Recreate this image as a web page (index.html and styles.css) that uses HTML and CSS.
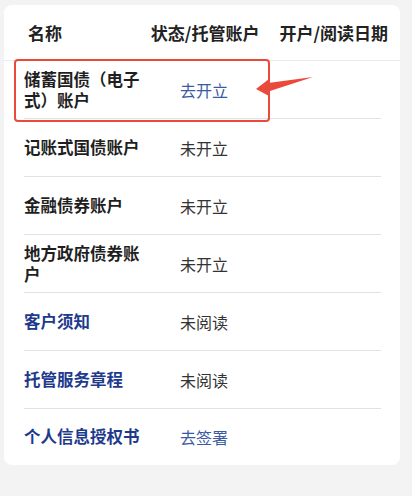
FILE: index.html
```html
<!DOCTYPE html>
<html lang="zh-CN">
<head>
  <meta charset="UTF-8">
  <title>账户列表</title>
  <link rel="stylesheet" href="styles.css">
</head>
<body>
  <div class="card">
    <div class="head">
      <span class="h-name">名称</span>
      <span class="h-status">状态/托管账户</span>
      <span class="h-date">开户/阅读日期</span>
    </div>

    <div class="row">
      <span class="name">储蓄国债（电子式）账户</span>
      <span class="status link">去开立</span>
    </div>
    <div class="row">
      <span class="name">记账式国债账户</span>
      <span class="status">未开立</span>
    </div>
    <div class="row">
      <span class="name">金融债券账户</span>
      <span class="status">未开立</span>
    </div>
    <div class="row">
      <span class="name">地方政府债券账户</span>
      <span class="status">未开立</span>
    </div>
    <div class="row">
      <span class="name doc">客户须知</span>
      <span class="status">未阅读</span>
    </div>
    <div class="row">
      <span class="name doc">托管服务章程</span>
      <span class="status">未阅读</span>
    </div>
    <div class="row last">
      <span class="name doc">个人信息授权书</span>
      <span class="status link">去签署</span>
    </div>

    <!-- annotation -->
    <div class="mark"></div>
    <svg class="arrow" width="62" height="22" viewBox="0 0 62 22">
      <polygon points="0,13 13,3 12,7 57,1 14,15 13,20" fill="#ea4a3c"/>
    </svg>
  </div>
</body>
</html>
```

FILE: styles.css
```css
body {
  margin: 0;
  background: #f3f3f3;
  font-family: "Noto Sans CJK SC", "Noto Sans", sans-serif;
  color: #222;
}
.card {
  position: relative;
  margin: 5px 12px 0 4px;
  background: #fff;
  border-radius: 8px;
  padding-bottom: 1px;
}
.head {
  display: flex;
  align-items: center;
  height: 55px;
  padding: 0 12px 0 24px;
  border-bottom: 1px solid #ebebeb;
  font-size: 17px;
  font-weight: 700;
  color: #222;
}
.h-name {
  flex: 1;
}
.h-date {
  margin-left: 20px;
}
.row {
  display: flex;
  align-items: center;
  height: 57px;
  margin: 0 19px 0 20px;
  border-bottom: 1px solid #e2e2e2;
  font-size: 16px;
}
.row.last {
  border-bottom: none;
  height: 55px;
}
.name {
  width: 124px;
  margin-right: 32px;
  font-size: 16.5px;
  font-weight: 700;
  line-height: 21px;
  color: #1f1f1f;
}
.name.doc {
  color: #1e3a8c;
}
.status {
  color: #333;
}
.status.link {
  color: #3a5aa2;
}
.mark {
  position: absolute;
  left: 10px;
  top: 54px;
  width: 252px;
  height: 59px;
  border: 2.5px solid #ea4a3c;
  border-radius: 4px;
}
.arrow {
  position: absolute;
  left: 252px;
  top: 71px;
}
```
